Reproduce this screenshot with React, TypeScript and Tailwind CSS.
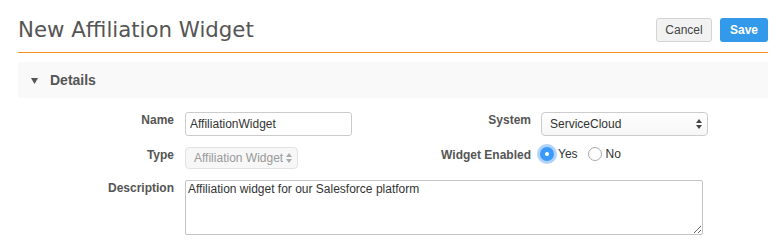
import React from 'react';

// stacked up/down arrows used by the native-looking selects
const SelectArrows: React.FC<{ color?: string }> = ({ color = '#555' }) => (
  <svg width="6" height="10" viewBox="0 0 6 10" className="absolute right-[5px] top-1/2 -translate-y-1/2 pointer-events-none">
    <polygon points="3,0 6,4 0,4" fill={color} />
    <polygon points="0,6 6,6 3,10" fill={color} />
  </svg>
);

const Label: React.FC<{ width: string; children: React.ReactNode }> = ({ width, children }) => (
  <div className={`${width} shrink-0 pt-[1px] text-right text-[12px] font-bold text-[#555] leading-[14px]`}>{children}</div>
);

const Radio: React.FC<{ checked?: boolean; label: string }> = ({ checked, label }) => (
  <label className="flex items-center gap-[3px] h-[14px] text-[12px] text-[#333]">
    {checked ? (
      <span className="flex items-center justify-center w-[14px] h-[14px] rounded-full bg-[#3b99fc] ring-[3px] ring-[#9cc8fb]/80">
        <span className="w-[4px] h-[4px] rounded-full bg-white" />
      </span>
    ) : (
      <span className="w-[14px] h-[14px] rounded-full border border-[#aaa] bg-white" />
    )}
    <span className="ml-[1px]">{label}</span>
  </label>
);

export default function App() {
  return (
    <div className="w-[779px] h-[246px] bg-white pl-[18px] pr-[11px] overflow-hidden" style={{ fontFamily: '"Liberation Sans", Arial, sans-serif' }}>
      {/* header */}
      <div className="flex items-center justify-between pt-[18px] pb-[10px] border-b border-[#f7941d]">
        <h1 className="text-[21.3px] leading-[24px] text-[#555] font-normal" style={{ fontFamily: '"DejaVu Sans", sans-serif' }}>
          New Affiliation Widget
        </h1>
        <div className="flex gap-[8px]">
          <button className="h-[24px] w-[56px] rounded-[3px] border border-[#d4d4d4] bg-[#f2f2f2] text-[12px] text-[#444]">Cancel</button>
          <button className="h-[24px] w-[48px] rounded-[3px] bg-[#3399ea] text-[12px] font-bold text-white">Save</button>
        </div>
      </div>

      {/* section bar */}
      <div className="mt-[9px] h-[36px] bg-[#f9f9f9] flex items-center pl-[13px]">
        <svg width="7" height="6" viewBox="0 0 7 6" className="mt-[1px]">
          <polygon points="0,0 7,0 3.5,6" fill="#555" />
        </svg>
        <span className="ml-[12px] text-[14px] font-bold text-[#555]">Details</span>
      </div>

      {/* form */}
      <div className="mt-[14px] flex flex-col">
        <div className="flex items-start">
          <Label width="w-[156px]">Name</Label>
          <input
            readOnly
            value="AffiliationWidget"
            className="ml-[11px] w-[167px] h-[24px] rounded-[3px] border border-[#ccc] px-[4px] text-[12px] text-[#333] outline-none"
          />
          <Label width="w-[179px]">System</Label>
          <div className="relative ml-[10px] w-[167px] h-[24px] rounded-[4px] border border-[#ccc] bg-gradient-to-b from-white to-[#f6f6f6] flex items-center pl-[8px] text-[12px] text-[#333]">
            ServiceCloud
            <SelectArrows color="#444" />
          </div>
        </div>

        <div className="flex items-start mt-[11px]">
          <Label width="w-[156px]">Type</Label>
          <div className="relative ml-[11px] w-[113px] h-[22px] rounded-[4px] border border-[#e2e2e2] bg-[#f7f7f7] flex items-center pl-[8px] text-[12px] text-[#999]">
            Affiliation Widget
            <SelectArrows color="#aaa" />
          </div>
          <Label width="w-[233px]">Widget Enabled</Label>
          <div className="ml-[9px] flex items-center gap-[10px]">
            <Radio checked label="Yes" />
            <Radio label="No" />
          </div>
        </div>

        <div className="flex items-start mt-[11px]">
          <Label width="w-[156px]">Description</Label>
          <textarea
            readOnly
            value="Affiliation widget for our Salesforce platform"
            className="ml-[11px] w-[518px] h-[55px] rounded-[2px] border border-[#c4c4c4] px-[2px] py-[1px] text-[12px] text-[#333] leading-[14px] outline-none resize"
          />
        </div>
      </div>
    </div>
  );
}
